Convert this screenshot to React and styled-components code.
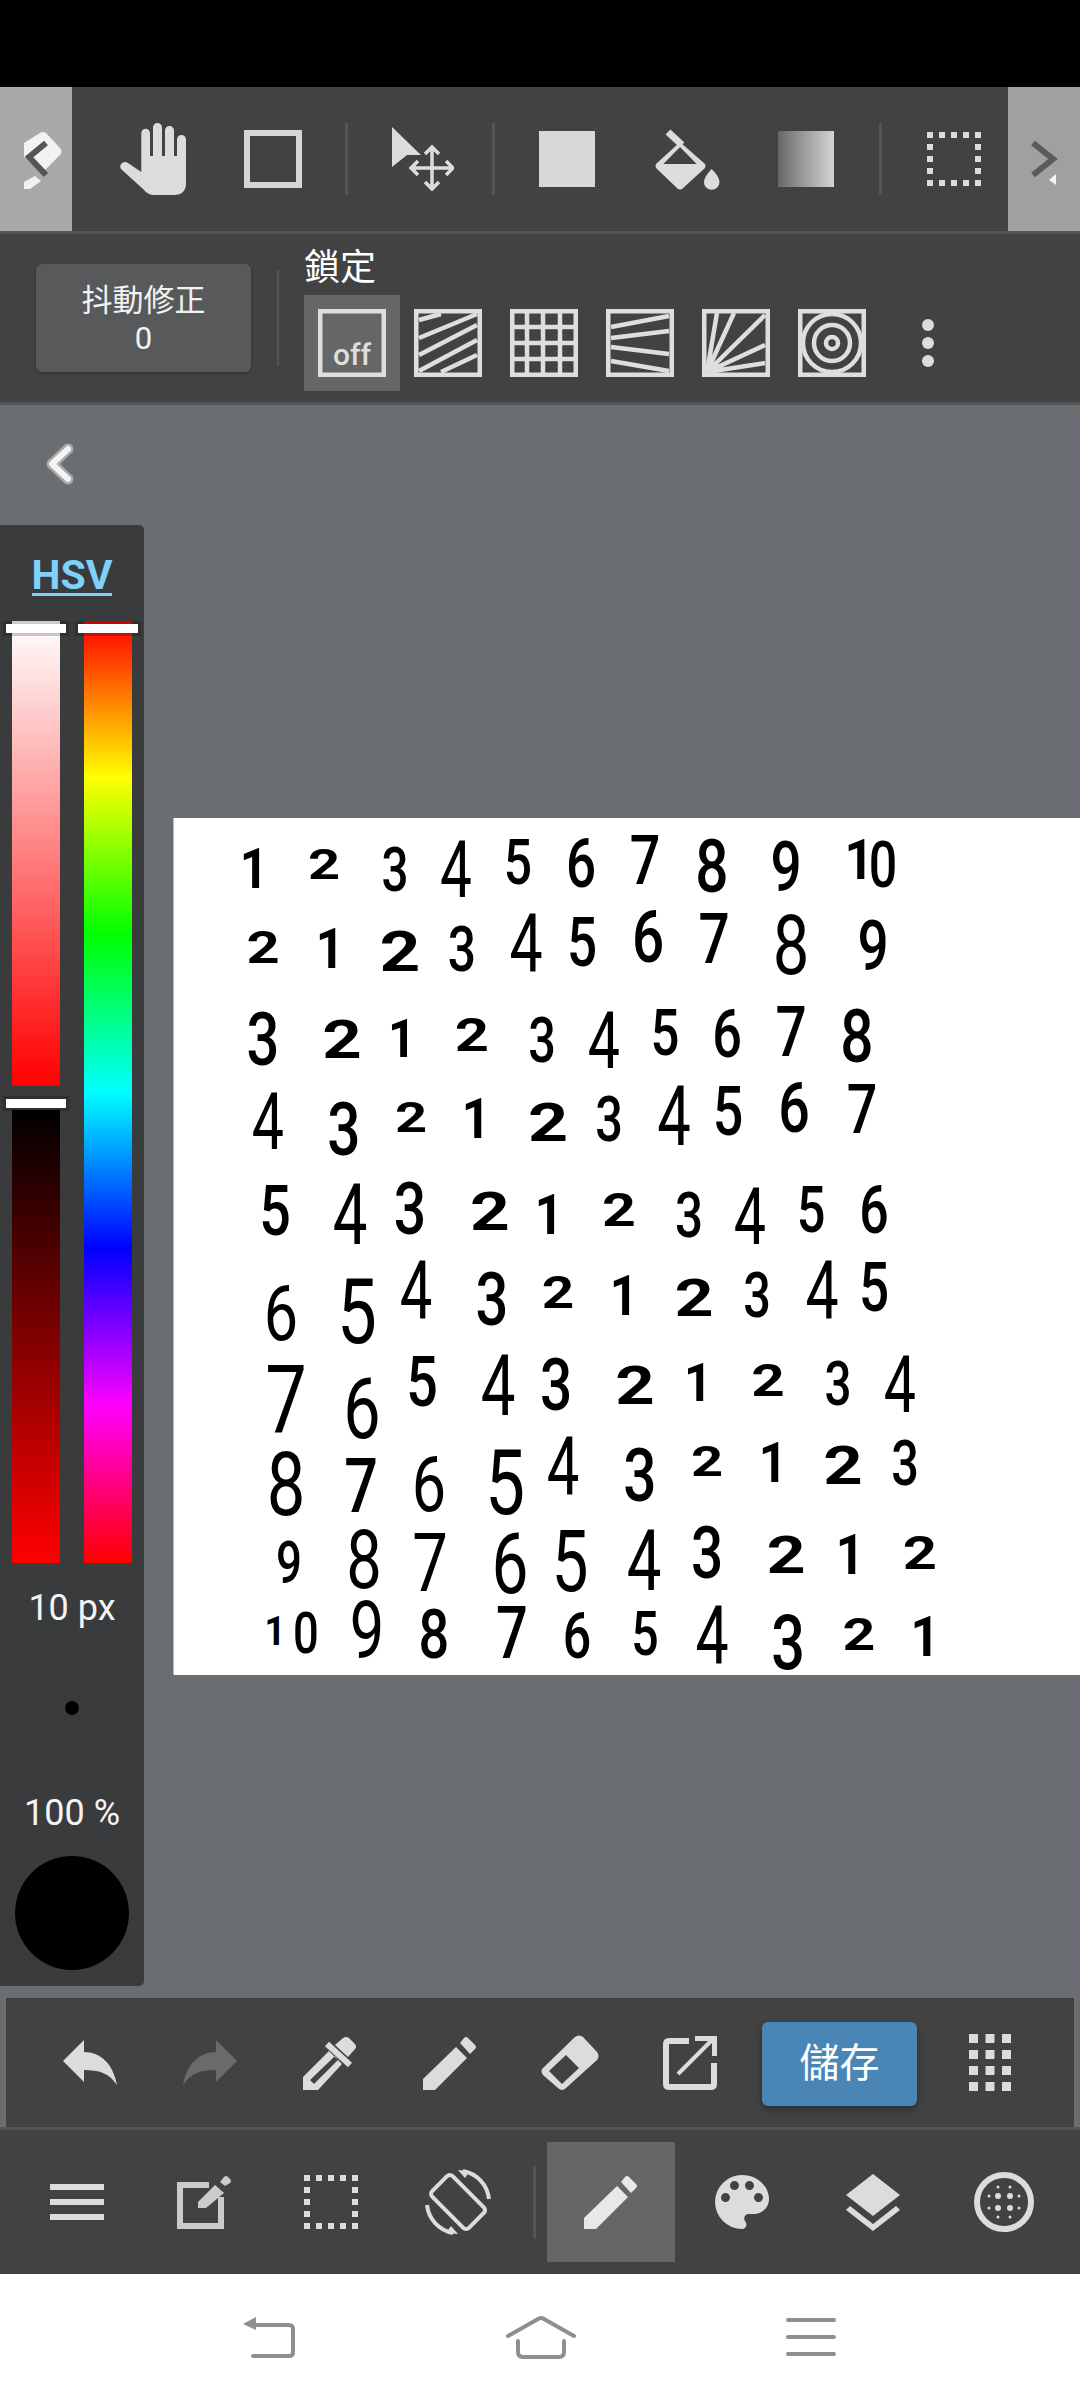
import React from 'react';
import styled, { createGlobalStyle } from 'styled-components';

const INK = '#dcdcdc';
const BAR = '#424242';
const LINE = '#555';
const CANVAS_BG = '#6a6d71';
const NAV = '#8f8f8f';
const FONT = 'Roboto, "Noto Sans CJK TC", "Noto Sans", sans-serif';

const GlobalStyle = createGlobalStyle`
  html, body {
    margin: 0;
    padding: 0;
    background: #000;
  }
  body {
    font-family: ${FONT};
  }
`;

const Page = styled.div`
  width: 1080px;
  height: 2400px;
  display: flex;
  flex-direction: column;
  overflow: hidden;
`;
const StatusBar = styled.div`
  height: 87px;
  background: #000;
`;

/* top toolbar */
const TopBar = styled.div`
  height: 144px;
  display: flex;
  background: ${BAR};
  border-bottom: 3px solid ${LINE};
`;
const SidePane = styled.div`
  width: ${(p) => p.$w || 72}px;
  margin-left: ${(p) => p.$gap || 0}px;
  display: flex;
  background: ${(p) => p.$bg};
`;
const Slot = styled.div`
  width: ${(p) => p.$w}px;
  flex: none;
  display: flex;
  align-items: center;
  justify-content: center;
`;
const Glyph = styled.svg`
  display: block;
  flex: none;
  fill: ${(p) => p.$tone || INK};
  color: ${(p) => p.$tone || INK};
`;
const Sep = styled.div`
  width: 3px;
  height: 72px;
  background: ${LINE};
`;
const Frame = styled.div`
  width: 58px;
  height: 58px;
  box-sizing: border-box;
  border: 6px solid #d6d6d6;
`;
const Solid = styled.div`
  width: 56px;
  height: 56px;
  background: #d8d8d8;
`;
const GradientSwatch = styled(Solid)`
  background: linear-gradient(to right, #666, #9a9a9a 45%, #d4d4d4);
`;

/* stabilizer + snap row */
const OptionBar = styled.div`
  height: 168px;
  display: flex;
  padding-left: 36px;
  background: ${BAR};
  border-bottom: 3px solid ${LINE};
`;
const StabButton = styled.div`
  width: 215px;
  height: 108px;
  box-sizing: border-box;
  padding-top: 3px;
  margin-top: 30px;
  border-radius: 6px;
  background: #58595b;
  box-shadow: 0 1px 3px rgba(0, 0, 0, 0.3);
  color: #f2f2f2;
  font-size: 31px;
  line-height: 38px;
  text-align: center;
  display: flex;
  flex-direction: column;
  justify-content: center;
`;
const OptionSep = styled(Sep)`
  height: 96px;
  margin: 36px 0 0 26px;
  width: 2px;
`;
const SnapColumn = styled.div`
  margin-left: 25px;
  padding-top: 14px;
`;
const SnapLabel = styled.div`
  height: 40px;
  margin-bottom: 7px;
  color: #fff;
  font-size: 36px;
  line-height: 40px;
`;
const SnapRow = styled.div`
  display: flex;
`;
const SnapSlot = styled.div`
  width: 96px;
  height: 96px;
  display: flex;
  align-items: center;
  justify-content: center;
  background: ${(p) => (p.$active ? '#666' : 'transparent')};
`;
const MoreDots = styled.div`
  display: flex;
  flex-direction: column;
  gap: 6px;
`;
const MoreDot = styled.div`
  width: 12px;
  height: 12px;
  border-radius: 50%;
  background: ${INK};
`;

/* workspace */
const Workspace = styled.div`
  flex: 1;
  display: flex;
  align-items: flex-start;
  background: ${CANVAS_BG};
`;
const LeftColumn = styled.div`
  width: 144px;
  flex: none;
  padding-top: 38px;
`;
const BackButton = styled.div`
  height: 82px;
  padding-left: 45px;
`;
const ColorPanel = styled.div`
  height: 1461px;
  box-sizing: border-box;
  padding-top: 34px;
  display: flex;
  flex-direction: column;
  align-items: center;
  background: #3a3b3d;
  border-radius: 0 5px 5px 0;
  color: #f4f4f4;
`;
const ModeLabel = styled.div`
  height: 34px;
  color: #7dd1fb;
  font-size: 41px;
  font-weight: 700;
  line-height: 33px;
  border-bottom: 3px solid #7dd1fb;
`;
const Sliders = styled.div`
  margin-top: 25px;
  height: 942px;
  display: flex;
  gap: 24px;
`;
const SliderColumn = styled.div`
  width: 48px;
  display: flex;
  flex-direction: column;
`;
const Track = styled.div`
  position: relative;
  flex: ${(p) => (p.$h ? `0 0 ${p.$h}px` : 1)};
  margin-top: ${(p) => p.$gap || 0}px;
  background: ${(p) => p.$fill};
`;
const Handle = styled.div`
  position: absolute;
  left: -9px;
  top: ${(p) => p.$top}px;
  width: 66px;
  height: 15px;
  box-sizing: border-box;
  padding: 3px;
  background: rgba(0, 0, 0, 0.2);
  &::after {
    content: '';
    display: block;
    height: 9px;
    background: #fff;
  }
`;
const ValueText = styled.div`
  margin-top: ${(p) => p.$gap}px;
  height: 40px;
  font-size: 36px;
  line-height: 40px;
`;
const BrushDot = styled.div`
  margin-top: 73px;
  width: 14px;
  height: 14px;
  border-radius: 50%;
  background: #000;
`;
const ColorWell = styled.div`
  margin-top: 23px;
  width: 114px;
  height: 114px;
  border-radius: 50%;
  background: #000;
`;
const Sheet = styled.div`
  position: relative;
  flex: 1;
  height: 857px;
  margin: 413px 0 0 29px;
  background: #fff;
  border-left: 1px solid #b8b8b8;
  overflow: hidden;
`;
const Digit = styled.span`
  position: absolute;
  color: #000;
  font-family: Roboto, sans-serif;
  line-height: 1;
`;

/* bottom bars */
const ActionWrap = styled.div`
  background: ${CANVAS_BG};
  border-bottom: 3px solid ${LINE};
  padding: 0 6px;
`;
const ActionBar = styled.div`
  height: 129px;
  display: flex;
  padding-left: 24px;
  background: ${BAR};
`;
const SaveButton = styled.div`
  width: 155px;
  height: 84px;
  margin: 24px 0 0 12px;
  flex: none;
  border-radius: 6px;
  background: #4a86b5;
  box-shadow: 0 3px 6px rgba(0, 0, 0, 0.35);
  color: #fff;
  font-size: 40px;
  line-height: 84px;
  text-align: center;
`;
const MainBar = styled.div`
  height: 144px;
  display: flex;
  align-items: center;
  padding-left: 13px;
  background: ${BAR};
`;
const MainSep = styled(Sep)`
  margin: 0 11px 0 12px;
`;
const ActiveTool = styled(Slot)`
  height: 120px;
  background: #666;
`;
const NavBar = styled.div`
  height: 126px;
  flex: none;
  display: flex;
  align-items: center;
  padding-left: 134px;
  background: #fff;
`;

/* icons */
const PaneLeftIcon = () => (
  <Glyph width="72" height="144" viewBox="0 0 72 144">
    <path fill="#f2f2f2" d="M24 56 L40 46 Q43 44 46 46 L60 61 Q63 65 60 68 L42 86 L24 70Z" />
    <path fill="#f2f2f2" d="M24 95 L35 89 L41 94 L30 102 Q27 102 24 102Z" />
    <path fill="none" stroke="#555" strokeWidth="6" d="M46 56 L29 70 L46 88" />
  </Glyph>
);
const PaneRightIcon = () => (
  <Glyph width="72" height="144" viewBox="0 0 72 144">
    <path fill="none" stroke="#5a5a5a" strokeWidth="6" d="M25 56 L45 72 L25 88" />
    <path fill="#f2f2f2" d="M48 87 V98 L41 93Z" />
  </Glyph>
);
const HandIcon = () => (
  <Glyph width="66" height="72" viewBox="0 0 66 72">
    <path d="M21.3 10a4.35 4.35 0 0 1 8.7 0V33H33V4.5a4.5 4.5 0 0 1 9 0V33H45V7.5a4.5 4.5 0 0 1 9 0V33H57V16.5a4.5 4.5 0 0 1 9 0V60Q66 72 54 72H34Q28 72 23 66L1 46Q-1 43 2 40Q5 38 8 40L21.3 49Z" />
  </Glyph>
);
const MoveIcon = () => (
  <Glyph width="62" height="64" viewBox="0 0 62 64">
    <path d="M0 0 L29 28 H15 L0 40Z" />
    <path
      fill="none"
      stroke="currentColor"
      strokeWidth="3.5"
      d="M40 20V62M19 41H61M33 27L40 20L47 27M33 55L40 62L47 55M26 34L19 41L26 48M54 34L61 41L54 48"
    />
  </Glyph>
);
const BucketIcon = () => (
  <Glyph width="65" height="61" viewBox="0 0 65 61">
    <path fillRule="evenodd" d="M25 13L50 35Q51 37 50 39L27 60Q25 61 23 60L1 39Q0 37 1 35ZM25 18L8.3 35H41.7Z" />
    <path fill="none" stroke="currentColor" strokeWidth="7" d="M13 3L27 16" />
    <path d="M56.7 40Q64.5 48 64.5 53a7.8 7.8 0 0 1-15.6 0Q49 48 56.7 40Z" />
  </Glyph>
);
const MARQUEE_CELLS = [0, 12, 24, 36, 48];
const MarqueeIcon = () => (
  <Glyph width="54" height="54" viewBox="0 0 54 54">
    {MARQUEE_CELLS.flatMap((x) =>
      MARQUEE_CELLS.filter((y) => x === 0 || x === 48 || y === 0 || y === 48).map((y) => (
        <rect key={`${x}-${y}`} x={x} y={y} width="6" height="6" />
      )),
    )}
  </Glyph>
);

const SnapIcon = ({ children }) => (
  <Glyph width="68" height="68" viewBox="0 0 68 68" $tone="#dedede">
    <rect x="2.25" y="2.25" width="63.5" height="63.5" fill="none" stroke="currentColor" strokeWidth="4.5" />
    {children}
  </Glyph>
);
const SnapLines = ({ d }) => <path fill="none" stroke="currentColor" strokeWidth="4.5" d={d} />;
const OffText = styled.text`
  font-family: Roboto, sans-serif;
  font-size: 30px;
  font-weight: 500;
`;
const SNAP_CLIP = 'snap-inner';

const UndoIcon = ({ tone, flip }) => (
  <Glyph width="54" height="45" viewBox="0 0 54 45" $tone={tone} style={flip ? { transform: 'scaleX(-1)' } : undefined}>
    <path d="M0 21L21 0V12C38 12 50 24 54 45C46 33 36 30 21 30V42Z" />
  </Glyph>
);
const DropperIcon = () => (
  <Glyph width="54" height="54" viewBox="0 0 54 54">
    <path fillRule="evenodd" d="M0 41L26 15L39 28L15 54H0ZM7 44L11 48L35 24L32 20Z" />
    <path fill="none" stroke="currentColor" strokeWidth="6" d="M24 8L47 29" />
    <path d="M32 9L40 2Q43 0 46 2L52 8Q54 11 52 13L45 21Z" />
  </Glyph>
);
const PencilIcon = ({ tone }) => (
  <Glyph width="54" height="54" viewBox="0 0 54 54" $tone={tone}>
    <path d="M0 43L33 11L44 22L12 54H0Z" />
    <path d="M37 7L41 2Q43 0 45 2L52 9Q54 11 52 13L47 18Z" />
  </Glyph>
);
const EraserIcon = () => (
  <Glyph width="58" height="56" viewBox="0 0 58 56">
    <path
      fillRule="evenodd"
      d="M34 2Q38-1 42 2L56 17Q59 21 56 25L25 53Q21 57 17 53L2 40Q-1 36 2 33ZM8 36L21 49L38 33L25 20Z"
    />
  </Glyph>
);
const ExportIcon = () => (
  <Glyph width="54" height="54" viewBox="0 0 54 54">
    <path fill="none" stroke="currentColor" strokeWidth="6" d="M26 5H6Q3 5 3 8V48Q3 51 6 51H48Q51 51 51 48V27" />
    <path fill="none" stroke="currentColor" strokeWidth="4" d="M15 38L49 4" />
    <path d="M32 0H54V20H49V5H32Z" />
  </Glyph>
);
const DotGridIcon = () => (
  <Glyph width="42" height="58" viewBox="0 0 42 58">
    {[0, 16.5, 33].flatMap((x) =>
      [0, 16, 32, 48].map((y) => <rect key={`${x}-${y}`} x={x} y={y} width="9" height="9" />),
    )}
  </Glyph>
);
const MenuIcon = () => (
  <Glyph width="54" height="36" viewBox="0 0 54 36">
    <rect width="54" height="6" />
    <rect y="15" width="54" height="6" />
    <rect y="30" width="54" height="6" />
  </Glyph>
);
const EditIcon = () => (
  <Glyph width="54" height="54" viewBox="0 0 54 54" $tone="#cbcbcb">
    <path fill="none" stroke="currentColor" strokeWidth="6" d="M32 10H3V51H44V22" />
    <path d="M21 27L38 10L47 18L29 33H21Z" />
    <path d="M43 7L47 2Q49 0 51 2L53 4Q55 6 53 8L48 11Z" />
  </Glyph>
);
const RotateIcon = () => (
  <Glyph width="66" height="66" viewBox="0 0 66 66">
    <rect
      x="-26"
      y="-14.5"
      width="52"
      height="29"
      rx="4"
      fill="none"
      stroke="currentColor"
      strokeWidth="4"
      transform="translate(33 33) rotate(45)"
    />
    <path fill="none" stroke="currentColor" strokeWidth="4" d="M38 2A32 32 0 0 1 64 30M28 64A32 32 0 0 1 2 36" />
    <path d="M33 1L45 2L40 9ZM33 65L21 64L26 57Z" />
  </Glyph>
);
const PaletteIcon = () => (
  <Glyph width="54" height="54" viewBox="3 3 18 18">
    <path d="M12 3a9 9 0 0 0 0 18c.83 0 1.5-.67 1.5-1.5 0-.39-.15-.74-.39-1.01-.23-.26-.38-.61-.38-.99 0-.83.67-1.5 1.5-1.5H16c2.76 0 5-2.24 5-5 0-4.42-4.03-8-9-8zm-5.5 9c-.83 0-1.5-.67-1.5-1.5S5.67 9 6.5 9 8 9.67 8 10.5 7.33 12 6.5 12zm3-4C8.67 8 8 7.33 8 6.5S8.67 5 9.5 5s1.5.67 1.5 1.5S10.33 8 9.5 8zm5 0c-.83 0-1.5-.67-1.5-1.5S13.67 5 14.5 5s1.5.67 1.5 1.5S15.33 8 14.5 8zm3 4c-.83 0-1.5-.67-1.5-1.5S16.67 9 17.5 9s1.5.67 1.5 1.5-.67 1.5-1.5 1.5z" />
  </Glyph>
);
const LayersIcon = () => (
  <Glyph width="54" height="57" viewBox="0 0 54 57">
    <path d="M27 0L54 21L27 42L0 21Z" />
    <path d="M4 32L27 50L50 32L54 36L27 57L0 36Z" />
  </Glyph>
);
const DOTS_BIG = [[-6, -6], [6, -6], [-6, 6], [6, 6]];
const DOTS_SMALL = [[-15, -6], [15, -6], [-15, 6], [15, 6], [-6, -15], [6, -15], [-6, 15], [6, 15]];
const TextureIcon = () => (
  <Glyph width="60" height="60" viewBox="-30 -30 60 60">
    <circle r="27" fill="none" stroke="currentColor" strokeWidth="6" />
    {DOTS_BIG.map(([x, y]) => (
      <circle key={`${x}${y}`} cx={x} cy={y} r="3" />
    ))}
    {DOTS_SMALL.map(([x, y]) => (
      <circle key={`${x}${y}`} cx={x} cy={y} r="1.5" />
    ))}
  </Glyph>
);
const NavBack = () => (
  <Glyph width="52" height="41" viewBox="0 0 52 41" $tone={NAV}>
    <path d="M0 7L13 0V13Z" />
    <path
      fill="none"
      stroke="currentColor"
      strokeWidth="4"
      strokeLinecap="round"
      d="M10 8H46Q50 8 50 12V35Q50 39 46 39H10"
    />
  </Glyph>
);
const NavHome = () => (
  <Glyph width="70" height="43" viewBox="0 0 70 43" $tone={NAV}>
    <path
      fill="none"
      stroke="currentColor"
      strokeWidth="4"
      strokeLinecap="round"
      d="M2 20L32 3Q35 1 38 3L68 20M12 25V36Q12 41 17 41H53Q58 41 58 36V25"
    />
  </Glyph>
);
const NavMenu = () => (
  <Glyph width="50" height="38" viewBox="0 0 50 38" $tone={NAV}>
    <path fill="none" stroke="currentColor" strokeWidth="4" strokeLinecap="round" d="M2 2H48M2 19H48M2 36H48" />
  </Glyph>
);
const BackChevron = () => (
  <Glyph width="30" height="42" viewBox="0 0 30 42">
    <path fill="none" stroke="#a9a9a9" strokeWidth="11" strokeLinecap="round" strokeLinejoin="round" d="M23 6L7 21L23 36" />
    <path fill="none" stroke="#f4f4f4" strokeWidth="6" strokeLinecap="round" strokeLinejoin="round" d="M23 6L7 21L23 36" />
  </Glyph>
);

/* the ink on the sheet, kept as characters: [char, centre x, top, bottom] on a crop 1.96x wide and 3x high */
const UPPER_ROWS = [
  [['1', 163, 118, 235], ['2', 300, 120, 212], ['3', 440, 115, 245], ['4', 558, 97, 265], ['5', 680, 92, 228], ['6', 803, 90, 235], ['7', 930, 78, 225], ['8', 1060, 90, 250], ['9', 1205, 95, 245], ['1', 1348, 90, 210], ['0', 1395, 95, 232]],
  [['2', 180, 365, 460], ['1', 312, 360, 478], ['2', 448, 368, 485], ['3', 570, 352, 488], ['4', 695, 315, 490], ['5', 805, 325, 470], ['6', 935, 305, 460], ['7', 1065, 312, 462], ['8', 1215, 320, 498], ['9', 1375, 332, 482]],
  [['3', 180, 610, 768], ['2', 335, 632, 745], ['1', 452, 630, 745], ['2', 590, 630, 728], ['3', 728, 625, 758], ['4', 848, 608, 778], ['5', 968, 603, 742], ['6', 1090, 602, 745], ['7', 1215, 590, 740], ['8', 1345, 600, 760]],
  [['4', 190, 850, 1020], ['3', 340, 880, 1040], ['2', 470, 878, 970], ['1', 598, 870, 988], ['2', 738, 880, 995], ['3', 858, 862, 995], ['4', 985, 828, 1005], ['5', 1092, 833, 980], ['6', 1222, 818, 970], ['7', 1355, 825, 972]],
  [['5', 203, 1128, 1280], ['4', 350, 1122, 1305], ['3', 468, 1122, 1278], ['2', 625, 1148, 1262], ['1', 740, 1155, 1272], ['2', 878, 1155, 1252], ['3', 1015, 1150, 1285], ['4', 1135, 1135, 1305], ['5', 1255, 1130, 1268], ['6', 1378, 1130, 1272]],
];
const LOWER_ROWS = [
  [['6', 215, 105, 272], ['5', 365, 88, 282], ['4', 480, 40, 212], ['3', 630, 72, 230], ['2', 758, 85, 178], ['1', 887, 78, 195], ['2', 1025, 88, 200], ['3', 1148, 72, 205], ['4', 1275, 35, 210], ['5', 1378, 42, 187]],
  [['7', 225, 350, 552], ['6', 375, 390, 572], ['5', 492, 320, 472], ['4', 640, 315, 498], ['3', 755, 330, 485], ['2', 910, 352, 465], ['1', 1033, 342, 458], ['2', 1170, 342, 438], ['3', 1308, 338, 468], ['4', 1428, 320, 490]],
  [['8', 225, 610, 798], ['7', 372, 630, 792], ['6', 505, 618, 785], ['5', 655, 600, 795], ['4', 768, 568, 740], ['3', 920, 598, 758], ['2', 1050, 590, 682], ['1', 1180, 582, 700], ['2', 1318, 592, 705], ['3', 1438, 575, 708]],
  [['9', 232, 875, 1000], ['8', 378, 845, 1018], ['7', 508, 855, 1028], ['6', 665, 855, 1035], ['5', 783, 848, 1028], ['4', 928, 842, 1025], ['3', 1050, 835, 990], ['2', 1205, 858, 970], ['1', 1330, 860, 978], ['2', 1468, 862, 960]],
  [['1', 203, 1098, 1185], ['0', 265, 1088, 1212], ['9', 385, 1060, 1228], ['8', 515, 1082, 1230], ['7', 668, 1075, 1228], ['6', 795, 1088, 1225], ['5', 930, 1090, 1222], ['4', 1060, 1070, 1245], ['3', 1210, 1100, 1262], ['2', 1348, 1108, 1202], ['1', 1477, 1100, 1220]],
];

// handwritten digits run narrower than the font, except the flat wide 2s
const WIDTH_BY_CHAR = { 1: 0.9, 2: 1.3, 4: 0.72 };

// heavier on short digits so the pen width stays about the same
const weightFor = (size) => (size < 58 ? 700 : size < 78 ? 500 : 400);

function placeDigits(rows, originY) {
  return rows.flat().map(([char, x, top, bottom]) => {
    const size = (bottom - top) / 3 / 0.711;
    return {
      char,
      left: 170 + x / 1.96 - 173,
      top: originY + (top + bottom) / 6 - 818,
      size,
      weight: weightFor(size),
      stretch: WIDTH_BY_CHAR[char] || 0.78,
    };
  });
}
const DIGITS = [...placeDigits(UPPER_ROWS, 810), ...placeDigits(LOWER_ROWS, 1250)];

const TOP_SLOTS = [
  [162, <HandIcon />],
  [78, <Frame />],
  [68, <Sep />],
  [85, <MoveIcon />],
  [56, <Sep />],
  [92, <Solid />],
  [148, <BucketIcon />],
  [90, <GradientSwatch />],
  [58, <Sep />],
  [90, <MarqueeIcon />],
];
const ACTION_SLOTS = [
  <UndoIcon />,
  <UndoIcon tone="#6a6a6a" flip />,
  <DropperIcon />,
  <PencilIcon />,
  <EraserIcon />,
  <ExportIcon />,
];

export default function App() {
  return (
    <Page>
      <GlobalStyle />
      <StatusBar />

      <TopBar>
        <SidePane $bg="#a9a9a9">
          <PaneLeftIcon />
        </SidePane>
        {TOP_SLOTS.map(([w, icon], i) => (
          <Slot key={i} $w={w}>
            {icon}
          </Slot>
        ))}
        <SidePane $bg="#a0a0a0" $gap={9}>
          <PaneRightIcon />
        </SidePane>
      </TopBar>

      <OptionBar>
        <StabButton>
          <div>抖動修正</div>
          <div>0</div>
        </StabButton>
        <OptionSep />
        <SnapColumn>
          <SnapLabel>鎖定</SnapLabel>
          <SnapRow>
            <SnapSlot $active>
              <SnapIcon>
                <OffText x="15" y="56" fill="currentColor">off</OffText>
              </SnapIcon>
            </SnapSlot>
            <SnapSlot>
              <SnapIcon>
                <SnapLines d="M5 11L27 5M5 29L63 5M5 46L63 16M5 62L63 31M27 63L63 46" />
              </SnapIcon>
            </SnapSlot>
            <SnapSlot>
              <SnapIcon>
                <SnapLines d="M17 4V64M33 4V64M50 4V64M4 18H64M4 34H64M4 50H64" />
              </SnapIcon>
            </SnapSlot>
            <SnapSlot>
              <SnapIcon>
                <SnapLines d="M5 18L63 7M5 29L63 22M5 38L63 45M5 52L63 62" />
              </SnapIcon>
            </SnapSlot>
            <SnapSlot>
              <SnapIcon>
                <SnapLines d="M5 63L15 4M5 63L32 4M5 63L63 6M5 63L63 36M5 63L63 54" />
              </SnapIcon>
            </SnapSlot>
            <SnapSlot>
              <SnapIcon>
                <clipPath id={SNAP_CLIP}>
                  <rect width="68" height="68" />
                </clipPath>
                <g clipPath={`url(#${SNAP_CLIP})`} fill="none" stroke="currentColor" strokeWidth="4.5">
                  <circle cx="34" cy="34" r="29" />
                  <circle cx="34" cy="34" r="18" />
                  <circle cx="34" cy="34" r="6" />
                </g>
              </SnapIcon>
            </SnapSlot>
            <SnapSlot>
              <MoreDots>
                <MoreDot />
                <MoreDot />
                <MoreDot />
              </MoreDots>
            </SnapSlot>
          </SnapRow>
        </SnapColumn>
      </OptionBar>

      <Workspace>
        <LeftColumn>
          <BackButton>
            <BackChevron />
          </BackButton>
          <ColorPanel>
            <ModeLabel>HSV</ModeLabel>
            <Sliders>
              <SliderColumn>
                <Track $h={465} $fill="linear-gradient(to bottom, #fff, #f00)">
                  <Handle $top={0} />
                </Track>
                <Track $gap={24} $fill="linear-gradient(to bottom, #000, #f00)">
                  <Handle $top={-14} />
                </Track>
              </SliderColumn>
              <SliderColumn>
                <Track $fill="linear-gradient(to bottom, #f00, #ff0 16.6%, #0f0 33.3%, #0ff 50%, #00f 66.6%, #f0f 83.3%, #f00)">
                  <Handle $top={0} />
                </Track>
              </SliderColumn>
            </Sliders>
            <ValueText $gap={25}>10 px</ValueText>
            <BrushDot />
            <ValueText $gap={78}>100 %</ValueText>
            <ColorWell />
          </ColorPanel>
        </LeftColumn>
        <Sheet>
          {DIGITS.map((d, i) => (
            <Digit
              key={i}
              style={{
                left: d.left,
                top: d.top,
                fontSize: d.size,
                fontWeight: d.weight,
                transform: `translate(-50%, -50%) scaleX(${d.stretch})`,
              }}
            >
              {d.char}
            </Digit>
          ))}
        </Sheet>
      </Workspace>

      <ActionWrap>
        <ActionBar>
          {ACTION_SLOTS.map((icon, i) => (
            <Slot key={i} $w={120}>
              {icon}
            </Slot>
          ))}
          <SaveButton>儲存</SaveButton>
          <Slot $w={146}>
            <DotGridIcon />
          </Slot>
        </ActionBar>
      </ActionWrap>

      <MainBar>
        <Slot $w={127}>
          <MenuIcon />
        </Slot>
        <Slot $w={127}>
          <EditIcon />
        </Slot>
        <Slot $w={127}>
          <MarqueeIcon />
        </Slot>
        <Slot $w={127}>
          <RotateIcon />
        </Slot>
        <MainSep />
        <ActiveTool $w={128}>
          <PencilIcon tone="#e8e8e8" />
        </ActiveTool>
        <Slot $w={134}>
          <PaletteIcon />
        </Slot>
        <Slot $w={128}>
          <LayersIcon />
        </Slot>
        <Slot $w={134}>
          <TextureIcon />
        </Slot>
      </MainBar>

      <NavBar>
        <Slot $w={270}>
          <NavBack />
        </Slot>
        <Slot $w={274}>
          <NavHome />
        </Slot>
        <Slot $w={266}>
          <NavMenu />
        </Slot>
      </NavBar>
    </Page>
  );
}
